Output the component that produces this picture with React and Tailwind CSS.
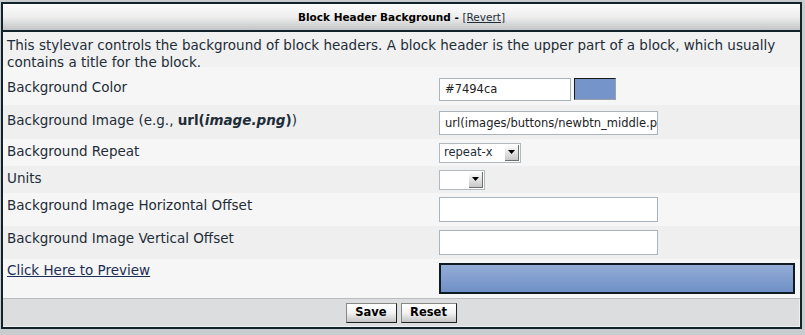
import React from "react";

const font = { fontFamily: "Verdana, 'DejaVu Sans', sans-serif" };

const Row = ({ label, children, shade, h, lp = "pt-[4px]" }) => (
  <div className={`grid grid-cols-[436px_1fr] ${shade ? "bg-[#efefef]" : "bg-[#f6f6f6]"} ${h}`}>
    <div className={`pl-[4px] leading-[17px] ${lp}`}>{label}</div>
    <div className="flex items-center gap-[3px]">{children}</div>
  </div>
);

const Select = ({ value, w }) => (
  <div className={`flex items-center h-[20px] ${w} bg-white border border-[#b0b8c0] text-[11.5px]`}>
    <span className="flex-1 pl-[4px] leading-none">{value}</span>
    <span className="w-[14px] h-[16px] mr-[1px] flex items-center justify-center bg-gradient-to-b from-white to-[#c8c8c8] border-r border-b border-[#707070]">
      <svg width="7" height="4" viewBox="0 0 7 4"><path d="M0 0h7L3.5 4z" fill="#000" /></svg>
    </span>
  </div>
);

const TextBox = ({ value, w = "w-[219px]", h = "h-[25px]" }) => (
  <input
    readOnly
    value={value}
    className={`${w} ${h} bg-white border border-[#aab4bc] text-[11.5px] pl-[5px] text-[#222] outline-none`}
    style={font}
  />
);

const App = () => {
  return (
    <div className="w-[805px] h-[335px] bg-[#c8ccce] pt-[2px] pl-[1px] pr-[3px] text-[13.5px] text-[#1e2d38]" style={font}>
      <div className="border-2 border-[#12232b] bg-[#f3f3f3]">
        <div className="h-[28px] border-b-2 border-[#12232b] border-t border-t-white bg-gradient-to-b from-[#fbfbfb] via-[#ededed] to-[#c2c4c6] flex items-center justify-center text-[10.5px] font-bold text-black">
          Block Header Background -&nbsp;<span className="font-normal underline text-[#1e2d38]">[Revert]</span>
        </div>
        <div className="bg-[#f1f1f1] px-[4px] pt-[5px] leading-[17px] h-[35px]">
          This stylevar controls the background of block headers. A block header is the upper part of a block, which usually contains a title for the block.
        </div>
        <Row label="Background Color" h="h-[38px]" lp="pt-[12px]">
          <div className="pt-[6px] flex gap-[3px]">
            <TextBox value="#7494ca" w="w-[132px]" h="h-[23px]" />
            <div className="w-[42px] h-[22px] bg-[#7494ca] border border-[#1a1a1a] border-r-[#9aa0a8] border-b-[#9aa0a8]" />
          </div>
        </Row>
        <Row label={<span>Background Image (e.g., <b>url(<i>image.png</i>)</b>)</span>} h="h-[34px]" lp="pt-[7px]" shade>
          <div className="pt-[2px]">
            <TextBox value="url(images/buttons/newbtn_middle.png)" h="h-[24px]" />
          </div>
        </Row>
        <Row label="Background Repeat" h="h-[27px]">
          <Select value="repeat-x" w="w-[82px]" />
        </Row>
        <Row label="Units" h="h-[27px]" shade>
          <Select value="" w="w-[46px]" />
        </Row>
        <Row label="Background Image Horizontal Offset" h="h-[33px]">
          <TextBox value="" />
        </Row>
        <Row label="Background Image Vertical Offset" h="h-[33px]" shade>
          <TextBox value="" />
        </Row>
        <div className="grid grid-cols-[436px_1fr] h-[40px] bg-[#f6f6f6] border-b border-[#b8bcc0]">
          <div className="pl-[4px] pt-[3px] leading-[17px]">
            <a className="underline text-[#1c2e55]" href="#">Click Here to Preview</a>
          </div>
          <div className="pt-[4px] pr-[5px]">
            <div className="h-[31px] border-2 border-[#0f1a22] bg-gradient-to-b from-[#94acd6] to-[#6f90c6]" />
          </div>
        </div>
        <div className="h-[28px] bg-[#dcdddf] border-r border-b border-[#f0f0f0] flex justify-center items-start pt-[4px] gap-[4px]">
          <button className="w-[51px] h-[20px] bg-gradient-to-b from-white via-[#f2f2f2] to-[#c4c4c4] border border-[#222] border-t-[#888] border-l-[#888] text-[11.5px] font-bold text-black" style={font}>Save</button>
          <button className="w-[56px] h-[20px] bg-gradient-to-b from-white via-[#f2f2f2] to-[#c4c4c4] border border-[#222] border-t-[#888] border-l-[#888] text-[11.5px] font-bold text-black" style={font}>Reset</button>
        </div>
      </div>
    </div>
  );
};

export default App;
